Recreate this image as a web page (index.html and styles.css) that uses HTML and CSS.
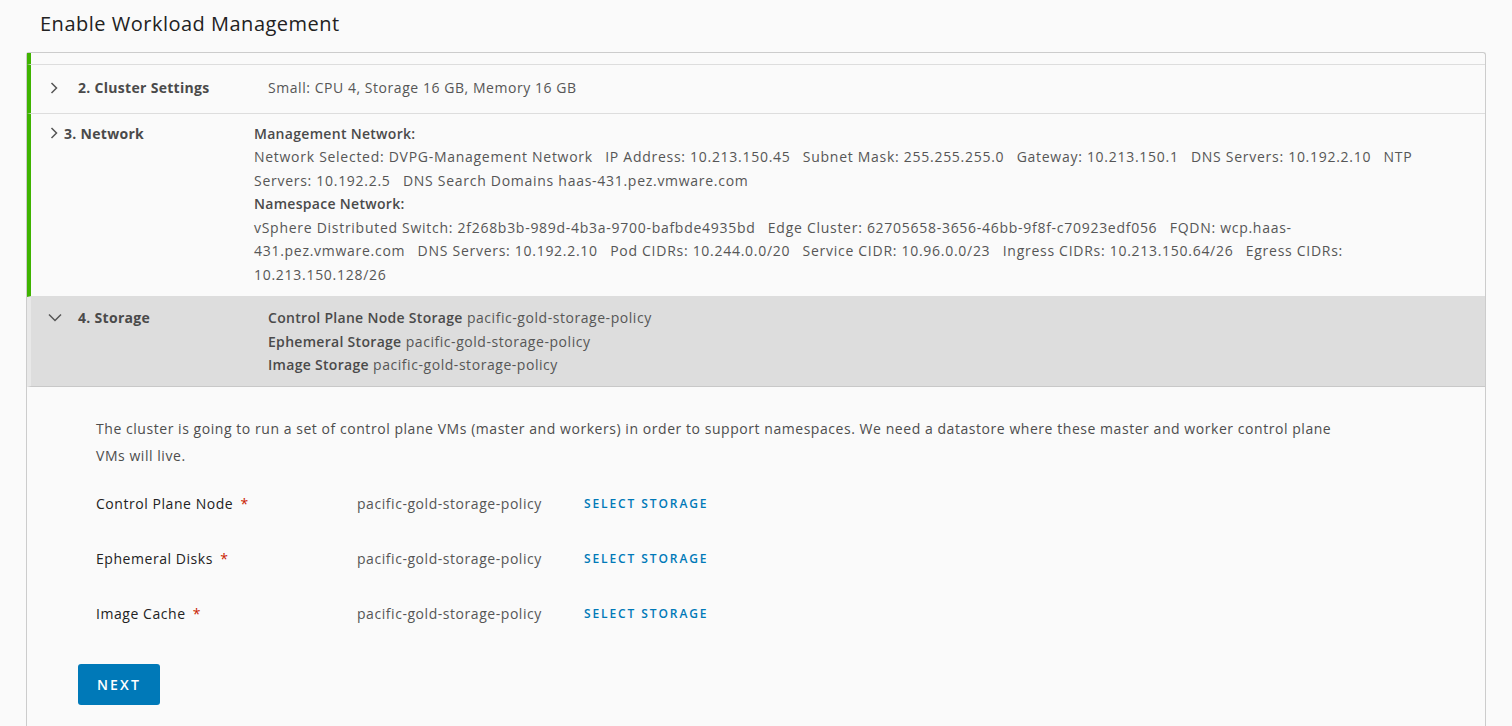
FILE: index.html
```html
<!DOCTYPE html>
<html lang="en">
<head>
<meta charset="utf-8">
<title>Enable Workload Management</title>
<link rel="stylesheet" href="styles.css">
</head>
<body>
<h1 class="page-title">Enable Workload Management</h1>
<div class="wizard">
  <div class="step step-done step-stub"></div>

  <div class="step step-done step-row">
    <div class="step-head">
      <span class="chev"><svg width="8" height="12" viewBox="0 0 8 12"><path d="M1.5 1 L6.5 6 L1.5 11" fill="none" stroke="#555" stroke-width="1.5"/></svg></span>
      <span class="step-name">2. Cluster Settings</span>
    </div>
    <div class="step-summary">Small: CPU 4, Storage 16 GB, Memory 16 GB</div>
  </div>

  <div class="step step-done step-network">
    <div class="step-head">
      <span class="chev chev-tight"><svg width="8" height="12" viewBox="0 0 8 12"><path d="M1.5 1 L6.5 6 L1.5 11" fill="none" stroke="#555" stroke-width="1.5"/></svg></span>
      <span class="step-name">3. Network</span>
    </div>
    <div class="step-summary net">
      <div class="sum-title">Management Network:</div>
      <div><span class="kv">Network Selected: DVPG-Management Network </span><span class="kv">IP Address: 10.213.150.45 </span><span class="kv">Subnet Mask: 255.255.255.0 </span><span class="kv">Gateway: 10.213.150.1 </span><span class="kv">DNS Servers: 10.192.2.10 </span><span class="kv">NTP Servers: 10.192.2.5 </span><span class="kv">DNS Search Domains haas-431.pez.vmware.com</span></div>
      <div class="sum-title">Namespace Network:</div>
      <div><span class="kv">vSphere Distributed Switch: 2f268b3b-989d-4b3a-9700-bafbde4935bd </span><span class="kv">Edge Cluster: 62705658-3656-46bb-9f8f-c70923edf056 </span><span class="kv">FQDN: wcp.haas-431.pez.vmware.com </span><span class="kv">DNS Servers: 10.192.2.10 </span><span class="kv">Pod CIDRs: 10.244.0.0/20 </span><span class="kv">Service CIDR: 10.96.0.0/23 </span><span class="kv">Ingress CIDRs: 10.213.150.64/26 </span><span class="kv">Egress CIDRs: 10.213.150.128/26</span></div>
    </div>
  </div>

  <div class="step step-active">
    <div class="step-head">
      <span class="chev chev-down"><svg width="14" height="9" viewBox="0 0 14 9"><path d="M1 1.5 L7 7.5 L13 1.5" fill="none" stroke="#555" stroke-width="1.5"/></svg></span>
      <span class="step-name">4. Storage</span>
    </div>
    <div class="step-summary">
      <div><b>Control Plane Node Storage</b> pacific-gold-storage-policy</div>
      <div><b>Ephemeral Storage</b> pacific-gold-storage-policy</div>
      <div><b>Image Storage</b> pacific-gold-storage-policy</div>
    </div>
  </div>

  <div class="step-content">
    <p class="intro">The cluster is going to run a set of control plane VMs (master and workers) in order to support namespaces. We need a datastore where these master and worker control plane VMs will live.</p>
    <div class="form-row">
      <span class="label">Control Plane Node <span class="req">*</span></span>
      <span class="value">pacific-gold-storage-policy</span>
      <a class="link">SELECT STORAGE</a>
    </div>
    <div class="form-row">
      <span class="label">Ephemeral Disks <span class="req">*</span></span>
      <span class="value">pacific-gold-storage-policy</span>
      <a class="link">SELECT STORAGE</a>
    </div>
    <div class="form-row">
      <span class="label">Image Cache <span class="req">*</span></span>
      <span class="value">pacific-gold-storage-policy</span>
      <a class="link">SELECT STORAGE</a>
    </div>
    <button class="btn-next">NEXT</button>
  </div>
</div>
</body>
</html>
```
FILE: styles.css
```css
html, body {
  margin: 0;
  padding: 0;
  background: #fafafa;
  height: 100%;
  overflow: hidden;
}
body {
  font-family: "Open Sans", "Liberation Sans", sans-serif;
  font-size: 14px;
  letter-spacing: 0.55px;
  color: #565656;
}
.page-title {
  margin: 0;
  padding: 10px 0 0 40px;
  height: 52px;
  box-sizing: border-box;
  font-size: 20px;
  font-weight: 400;
  line-height: 28px;
  letter-spacing: 0.5px;
  color: #222;
}
.wizard {
  margin: 0 26px 0 26px;
  border: 1px solid #cccccc;
  border-bottom: none;
  border-radius: 3px 3px 0 0;
  min-height: 800px;
  background: #fafafa;
}
.step {
  display: flex;
  border-bottom: 1px solid #dddddd;
  border-left: 4px solid transparent;
}
.step-done {
  border-left-color: #3fb300;
}
.step-stub {
  height: 11px;
}
.step-head {
  display: flex;
  align-items: flex-start;
  width: 237px;
  flex: none;
}
.chev {
  width: 28px;
  flex: none;
  padding-left: 19px;
  height: 23px;
  display: flex;
  align-items: center;
}
.chev-tight {
  width: 14px;
}
.chev-down {
  padding-left: 17px;
  width: 30px;
}
.step-name {
  font-weight: 700;
  line-height: 23px;
  letter-spacing: 0.3px;
  color: #4a4a4a;
}
.step-row {
  padding: 11px 0 13px;
}
.step-network {
  padding: 8px 0 10px;
}
.step-network .step-head {
  width: 223px;
}
.step-summary {
  line-height: 23.5px;
  flex: 1;
  padding-right: 60px;
}
.net {
  letter-spacing: 0.72px;
}
.kv {
  margin-right: 8px;
}
.sum-title {
  font-weight: 600;
  letter-spacing: 0.3px;
  color: #4a4a4a;
}
.step-summary b {
  font-weight: 600;
  letter-spacing: 0.3px;
  color: #4a4a4a;
}
.step-active {
  background: #dddddd;
  border-left-color: #e8e8e8;
  padding: 9px 0 9px;
  border-bottom-color: #c8c8c8;
}
.step-content {
  padding: 28px 100px 0 69px;
}
.intro {
  margin: 0 0 7px;
  line-height: 27px;
  max-width: 1250px;
  color: #4d4d4d;
}
.form-row {
  display: flex;
  align-items: center;
  height: 55px;
}
.label {
  width: 261px;
  flex: none;
  color: #222;
}
.req {
  color: #c92100;
  margin-left: 3px;
}
.value {
  width: 227px;
  flex: none;
  color: #565656;
}
.link {
  color: #0079b8;
  font-size: 12px;
  font-weight: 600;
  letter-spacing: 1.9px;
  text-transform: uppercase;
}
.btn-next {
  margin-top: 23px;
  margin-left: -18px;
  width: 82px;
  height: 41px;
  border: none;
  border-radius: 3px;
  background: #0079b8;
  color: #fff;
  font-family: inherit;
  font-size: 14px;
  font-weight: 600;
  letter-spacing: 2.2px;
  cursor: pointer;
}
```
